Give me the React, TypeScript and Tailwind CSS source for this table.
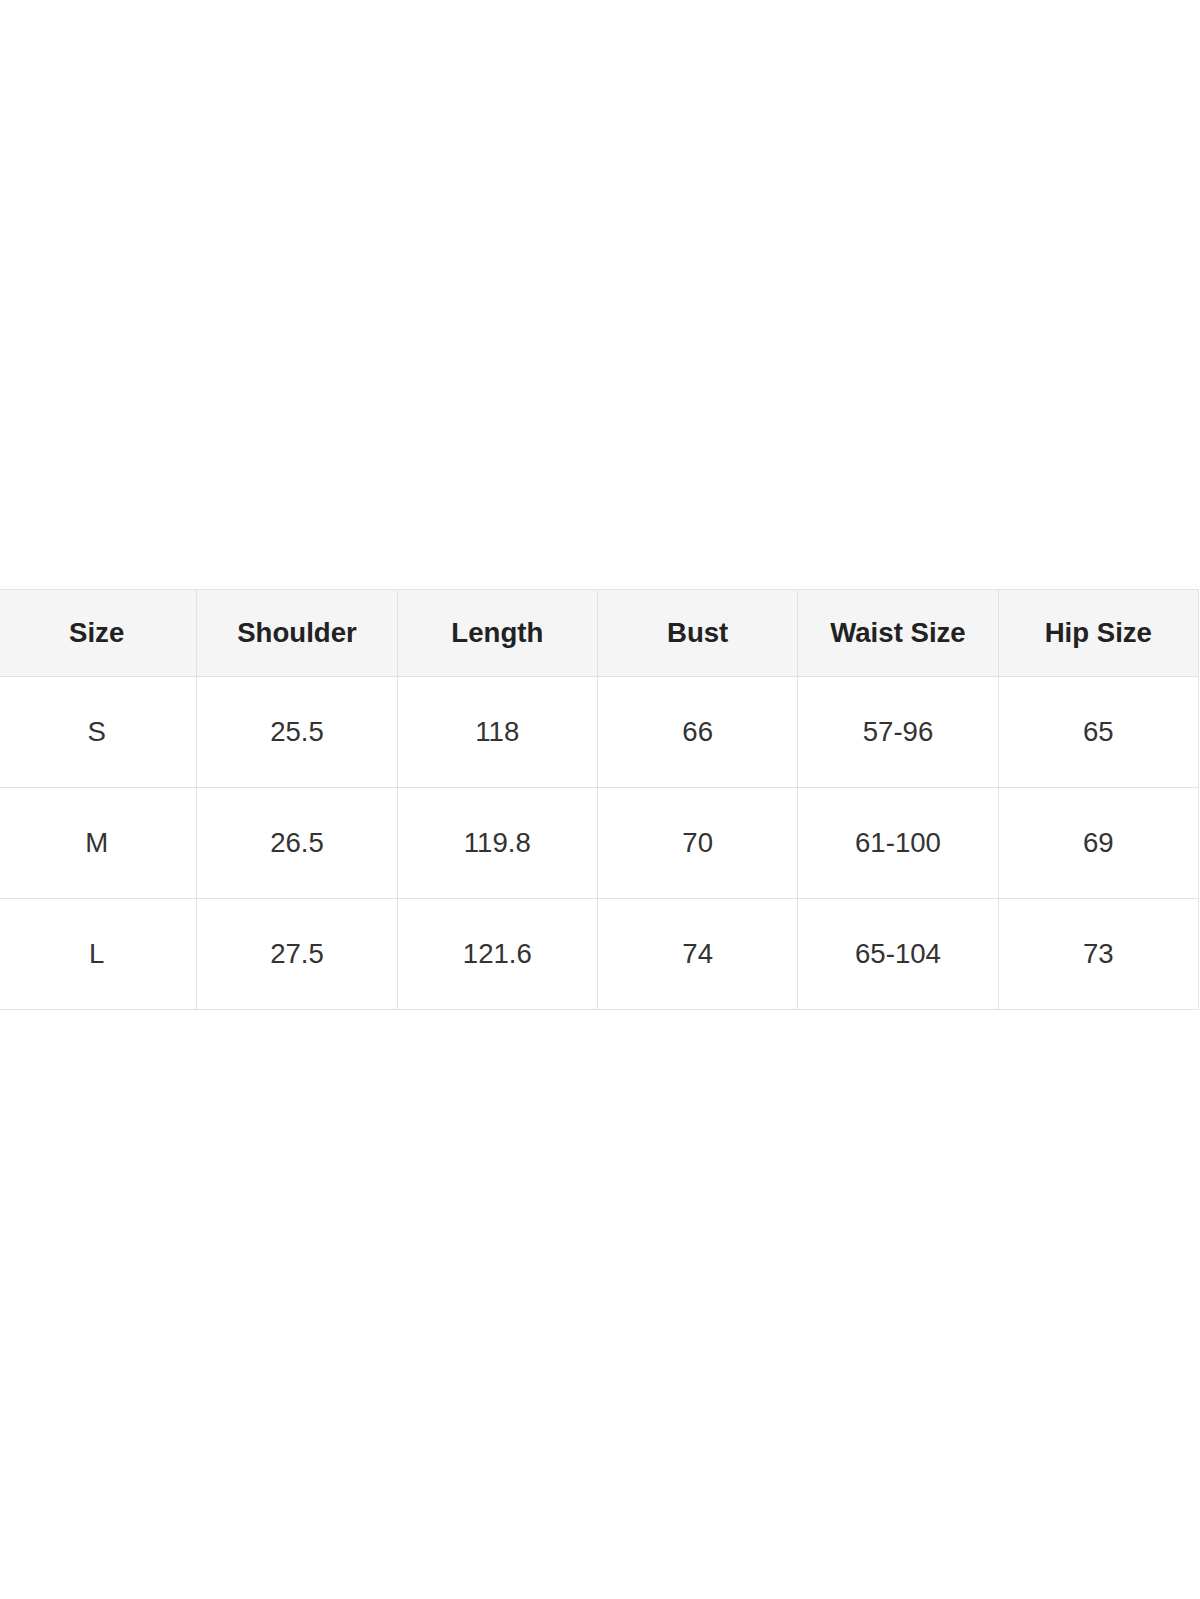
import React from "react";

const headers = ["Size", "Shoulder", "Length", "Bust", "Waist Size", "Hip Size"];
const rows = [
  ["S", "25.5", "118", "66", "57-96", "65"],
  ["M", "26.5", "119.8", "70", "61-100", "69"],
  ["L", "27.5", "121.6", "74", "65-104", "73"],
];

export default function App() {
  return (
    <div className="w-[1200px] h-[1599px] bg-white overflow-hidden pt-[589px]" style={{ fontFamily: '"Liberation Sans", Arial, sans-serif' }}>
      <table className="ml-[-4px] w-[1203px] table-fixed border-collapse">
        <thead>
          <tr className="h-[87px] bg-[#f5f5f5]">
            {headers.map((h) => (
              <th key={h} className="border border-[#e2e2e2] text-center align-middle text-[27.6px] font-bold text-[#222222] p-0">
                {h}
              </th>
            ))}
          </tr>
        </thead>
        <tbody>
          {rows.map((r) => (
            <tr key={r[0]} className="h-[111px] bg-white">
              {r.map((c, i) => (
                <td key={i} className="border border-[#e2e2e2] text-center align-middle text-[27.6px] text-[#333333] p-0">
                  {c}
                </td>
              ))}
            </tr>
          ))}
        </tbody>
      </table>
    </div>
  );
}
